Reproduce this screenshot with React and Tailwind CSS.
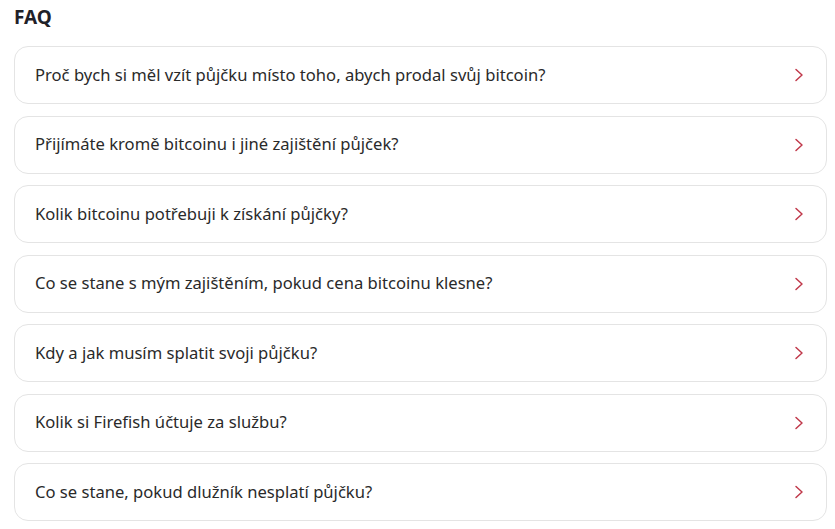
const questions = [
  'Proč bych si měl vzít půjčku místo toho, abych prodal svůj bitcoin?',
  'Přijímáte kromě bitcoinu i jiné zajištění půjček?',
  'Kolik bitcoinu potřebuji k získání půjčky?',
  'Co se stane s mým zajištěním, pokud cena bitcoinu klesne?',
  'Kdy a jak musím splatit svoji půjčku?',
  'Kolik si Firefish účtuje za službu?',
  'Co se stane, pokud dlužník nesplatí půjčku?',
];

export default function App() {
  return (
    <div className="bg-white min-h-[529px] px-[14px] pt-[5px] pr-[8px] font-['Noto_Sans',sans-serif] text-[#1f1f1f]">
      <h2 className="text-[19px] font-bold leading-[24px] text-[#1f2128]">FAQ</h2>
      <div className="mt-[17px] flex flex-col gap-[11.5px]">
        {questions.map(q => (
          <button
            key={q}
            className="flex items-center justify-between h-[58px] rounded-[14px] border border-[#e4e4e4] bg-white pl-[20px] pr-[22px] text-left"
          >
            <span className="text-[16.6px] text-[#2a2a2a]">{q}</span>
            <svg width="10" height="14" viewBox="0 0 10 14" fill="none">
              <path d="M2 1.5 L8 7 L2 12.5" stroke="#c0394b" strokeWidth="1.5" strokeLinecap="round" strokeLinejoin="round" />
            </svg>
          </button>
        ))}
      </div>
    </div>
  );
}
